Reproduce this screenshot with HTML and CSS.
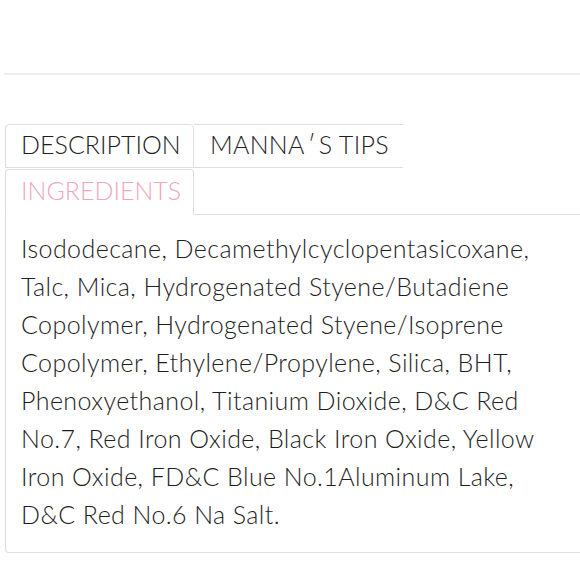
FILE: index.html
```html
<!DOCTYPE html>
<html>
<head>
<meta charset="utf-8">
<link rel="stylesheet" href="styles.css">
</head>
<body>
<div class="page">
  <div class="topline"></div>
  <div class="tabs">
    <div class="tab-row">
      <div class="tab tab-desc">DESCRIPTION</div>
      <div class="tab tab-tips">MANNA<span class="apos">′</span>S TIPS</div>
    </div>
    <div class="tab-row tab-row-2">
      <div class="tab tab-active">INGREDIENTS</div>
      <div class="tab-fill"></div>
    </div>
  </div>
  <div class="panel">
    <p class="ingredients">Isododecane, Decamethylcyclopentasicoxane, Talc, Mica, Hydrogenated Styene/Butadiene Copolymer, Hydrogenated Styene/Isoprene Copolymer, Ethylene/Propylene, Silica, BHT, Phenoxyethanol, Titanium Dioxide, D&amp;C Red No.7, Red Iron Oxide, Black Iron Oxide, Yellow Iron Oxide, FD&amp;C Blue No.1Aluminum Lake, D&amp;C Red No.6 Na Salt.</p>
  </div>
</div>
</body>
</html>
```
FILE: styles.css
```css
html, body {
  margin: 0;
  padding: 0;
  background: #fff;
  overflow: hidden;
}
.page {
  width: 580px;
  padding-top: 73px;
  font-family: "Lato", "Noto Sans", sans-serif;
  font-weight: 300;
  color: #1e1e1e;
}
.topline {
  margin-left: 4px;
  height: 2px;
  background: #ececec;
}
.tabs {
  margin-top: 49px;
  margin-left: 5px;
}
.tab-row {
  display: flex;
}
.tab {
  box-sizing: border-box;
  height: 44px;
  padding: 0 15px 4px;
  display: flex;
  align-items: center;
  font-size: 25px;
  font-weight: 300;
  color: #1e1e1e;
  line-height: 1;
  border: 1px solid #ddd;
  border-radius: 4px 4px 0 0;
  white-space: nowrap;
}
.tab-desc {
  width: 189px;
}
.tab-tips {
  width: 209px;
  border-left: none;
  border-right: none;
  border-radius: 0;
  padding-left: 16px;
  letter-spacing: 0.3px;
}
.apos {
  padding: 0 3px;
}
.tab-row-2 {
  margin-top: 1px;
}
.tab-active {
  width: 189px;
  height: 46px;
  color: #f0a6bd;
  border-bottom-color: transparent;
  padding-top: 0;
}
.tab-fill {
  flex: 1;
  border-bottom: 1px solid #ddd;
}
.panel {
  margin-left: 5px;
  height: 338px;
  border-left: 1px solid #ddd;
  border-bottom: 1px solid #ddd;
  border-radius: 0 0 0 4px;
  box-sizing: border-box;
  padding: 14px 0 0 15px;
}
.ingredients {
  margin: 0;
  width: 543px;
  font-size: 25px;
  letter-spacing: 0.42px;
  line-height: 38px;
}
```
